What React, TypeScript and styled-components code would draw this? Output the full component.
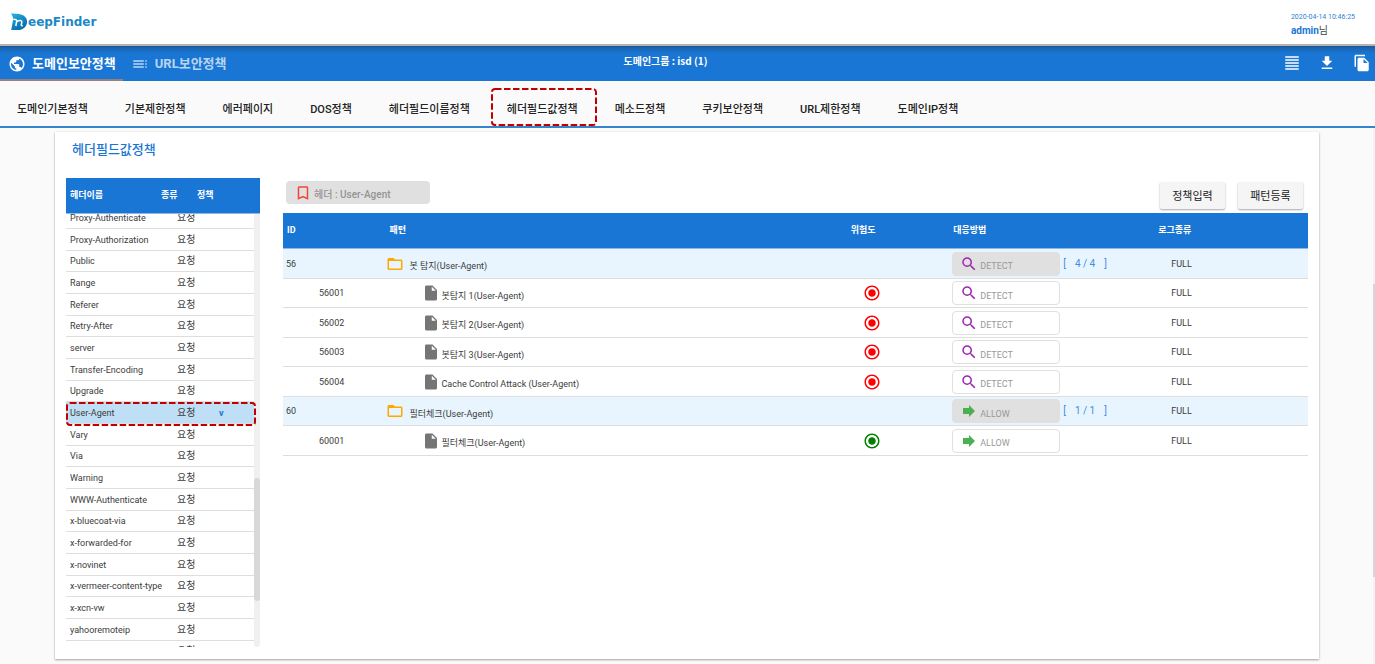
import React from 'react';
import styled, { createGlobalStyle } from 'styled-components';
import {
  MdBookmarkBorder,
  MdFileCopy,
  MdFileDownload,
  MdFolderOpen,
  MdFormatAlignJustify,
  MdForward,
  MdInsertDriveFile,
  MdPublic,
  MdRadioButtonChecked,
  MdSearch,
  MdToc,
} from 'react-icons/md';

const BLUE = '#1976d5';
const LINE = '#dedede';

const GlobalStyle = createGlobalStyle`
  *, *::before, *::after { box-sizing: border-box; }
  body {
    margin: 0;
    background: #fafafa;
    color: #3c3c3c;
    font-family: Roboto, "Noto Sans CJK KR", sans-serif;
    font-size: 9px;
    line-height: 12px;
  }
  button { font-family: inherit; cursor: pointer; }
  a { text-decoration: none; color: inherit; }
  svg { display: block; flex: none; }
`;

const Page = styled.div`
  display: flex;
  flex-direction: column;
  min-height: 100vh;
`;

/* ---------- top bar ---------- */

const TopBar = styled.header`
  display: flex;
  justify-content: space-between;
  height: 46px;
  padding: 0 20px 0 10px;
  background: #fff;
  border-bottom: 2px solid #b4b4b4;
`;

const Logo = styled.a`
  display: flex;
  align-items: center;
  color: #1b88c8;
  font: bold 12px/16px "DejaVu Sans", sans-serif;
`;

const Session = styled.div`
  padding-top: 12px;
  color: #2a7fd4;
  font-size: 7px;
  line-height: 10px;
`;

const UserName = styled.div`
  margin-top: 2px;
  color: #444;
  font-size: 10px;
  line-height: 14px;

  b { color: ${BLUE}; }
`;

/* ---------- main navigation ---------- */

const MainNav = styled.nav`
  display: grid;
  grid-template-columns: 1fr auto 1fr;
  height: 35px;
  padding-right: 4px;
  color: #fff;
  background: linear-gradient(#1b5896, #1b69b8 3px, ${BLUE} 8px);
`;

const NavGroup = styled.div`
  display: flex;
`;

const NavTab = styled.a<{ $active?: boolean }>`
  display: flex;
  align-items: center;
  gap: 6px;
  padding: 3px 7px 0 8px;
  border-bottom: 2px solid ${(p) => (p.$active ? '#98807f' : 'transparent')};
  color: ${(p) => (p.$active ? '#fff' : 'rgba(255, 255, 255, 0.7)')};
  font-size: 13px;
  font-weight: 700;
`;

const GroupName = styled.div`
  padding: 9px 40px 0 0;
  font: bold 10px/12px "Noto Sans CJK KR", sans-serif;
`;

const NavActions = styled.div`
  display: flex;
  align-items: center;
  justify-content: flex-end;
  gap: 17px;
  padding-bottom: 2px;
`;

const IconButton = styled.button`
  padding: 0;
  border: 0;
  background: none;
  color: #fff;
`;

/* ---------- policy tabs ---------- */

const PolicyTabs = styled.nav`
  display: flex;
  height: 47px;
  padding-top: 7px;
  border-bottom: 2px solid #3585cc;
`;

const PolicyTab = styled.a`
  position: relative;
  display: flex;
  align-items: center;
  justify-content: center;
  padding: 5px 20px 0 17px;
  color: #222;
  font-size: 11px;
  font-weight: 500;
`;

const Marker = styled.svg<{ $inset: string }>`
  position: absolute;
  inset: ${(p) => p.$inset};
  z-index: 2;
  overflow: visible;
  pointer-events: none;
`;

/* ---------- content ---------- */

const Content = styled.main`
  display: flex;
  flex: 1;
`;

const Scroller = styled.div`
  flex: 1;
  display: flex;
  padding: 4px 54px 5px 55px;
`;

const PageTrack = styled.div`
  width: 2px;
  padding-top: 156px;
  background: #f3f3f3;
`;

const PageThumb = styled.div`
  height: 293px;
  background: #d6d6d6;
`;

const Card = styled.section`
  flex: 1;
  padding: 10px 11px 12px;
  background: #fff;
  box-shadow: 0 1px 2px rgba(0, 0, 0, 0.35), 0 0 2px rgba(0, 0, 0, 0.06);
`;

const CardTitle = styled.h1`
  margin: 0 0 20px;
  padding-left: 6px;
  color: ${BLUE};
  font-size: 13px;
  line-height: 16px;
  font-weight: 500;
`;

const Columns = styled.div`
  display: flex;
  align-items: flex-start;
  gap: 23px;
`;

const Table = styled.table`
  width: 100%;
  table-layout: fixed;
  border-spacing: 0;

  th, td { padding: 0 0 0 4px; text-align: left; white-space: nowrap; }
  td { border-bottom: 1px solid ${LINE}; }
`;

const HeadRow = styled.tr`
  height: 36px;
  background: ${BLUE};
  color: #fff;
  font-size: 9px;
  font-weight: 700;

  th { padding-bottom: 2px; border-bottom: 1px solid #8ab9e8; }
`;

/* ---------- header list ---------- */

const HeaderPanel = styled.div`
  flex: 0 0 194px;
`;

const HeaderScroll = styled.div`
  display: flex;
  height: 433px;
  overflow: hidden;
`;

const HeaderRows = styled.div`
  flex: 1;
  margin-top: -7px;
`;

const HeaderRow = styled.tr<{ $selected?: boolean }>`
  position: relative;
  height: 22px;
  background: ${(p) => (p.$selected ? '#bfdff6' : '#fff')};

  &:nth-child(3n) { height: 21px; }
  td:nth-child(2) { font-size: 10px; }
  td:nth-child(3) { color: ${BLUE}; font-weight: 700; }
`;

const ListTrack = styled.div`
  width: 6px;
  padding-top: 264px;
  border-radius: 0 0 3px 3px;
  background: #f0f0f0;
`;

const ListThumb = styled.div`
  height: 123px;
  border-radius: 3px;
  background: #d8d8d8;
`;

/* ---------- pattern table ---------- */

const PatternPanel = styled.div`
  flex: 1;
  min-width: 0;
`;

const Toolbar = styled.div`
  display: flex;
  align-items: flex-start;
  height: 35px;
  padding: 3px 5px 0 3px;
`;

const CurrentHeader = styled.div`
  display: flex;
  align-items: center;
  gap: 2px;
  width: 144px;
  height: 23px;
  margin-right: auto;
  padding-left: 8px;
  border-radius: 4px;
  background: #e0e0e0;
  color: #949494;
  font-size: 10px;
  font-weight: 500;
`;

const Lowered = styled.span`
  padding-top: 5px;
`;

const RaisedButton = styled.button`
  width: 65px;
  height: 27px;
  margin: 1px 0 0 13px;
  padding: 0 0 2px;
  border: 0;
  border-radius: 2px;
  background: #f5f5f5;
  color: #222;
  font-size: 11px;
  box-shadow: 0 1px 2px rgba(0, 0, 0, 0.35);
`;

const PatternRow = styled.tr<{ $group?: boolean }>`
  height: 29px;
  background: ${(p) => (p.$group ? '#e8f5fe' : '#fff')};

  &:nth-child(odd) { height: 30px; }
  td:nth-child(1) { padding-left: ${(p) => (p.$group ? 3 : 36)}px; }
  td:nth-child(2) { padding-left: ${(p) => (p.$group ? 0 : 36)}px; }
  td:nth-child(3) { padding-left: 16px; }
  td:nth-child(4) { padding-left: 3px; }
  td:nth-child(5) { padding-left: 17px; }
`;

const PatternName = styled.div<{ $group?: boolean }>`
  display: flex;
  align-items: center;
  gap: ${(p) => (p.$group ? 6 : 2)}px;
`;

const Response = styled.div`
  display: flex;
  align-items: center;
`;

const ResponseButton = styled.button<{ $group?: boolean }>`
  display: flex;
  align-items: center;
  gap: 2px;
  width: 108px;
  height: 24px;
  padding: 0 0 0 7px;
  border: 1px solid #e0e0e0;
  border-radius: 4px;
  background: ${(p) => (p.$group ? '#e0e0e0' : '#fff')};
  color: #999;
  font-size: 9px;
  line-height: 12px;
`;

const Count = styled.span`
  display: flex;
  gap: 9px;
  padding-left: 3px;
  color: #3f8ede;
  font-size: 10px;
  white-space: nowrap;
`;

const policyTabs = [
  '도메인기본정책', '기본제한정책', '에러페이지', 'DOS정책', '헤더필드이름정책',
  '헤더필드값정책', '메소드정책', '쿠키보안정책', 'URL제한정책', '도메인IP정책',
];

const headerNames = [
  'Proxy-Authenticate', 'Proxy-Authorization', 'Public', 'Range', 'Referer', 'Retry-After',
  'server', 'Transfer-Encoding', 'Upgrade', 'User-Agent', 'Vary', 'Via', 'Warning',
  'WWW-Authenticate', 'x-bluecoat-via', 'x-forwarded-for', 'x-novinet',
  'x-vermeer-content-type', 'x-xcn-vw', 'yahooremoteip', 'yahooremotestate',
];

type Pattern = {
  id: string;
  name: string;
  action: 'DETECT' | 'ALLOW';
  count?: string;
  risk?: 'red' | 'green';
};

const patterns: Pattern[] = [
  { id: '56', name: '봇 탐지(User-Agent)', action: 'DETECT', count: '4 / 4' },
  { id: '56001', name: '봇탐지 1(User-Agent)', action: 'DETECT', risk: 'red' },
  { id: '56002', name: '봇탐지 2(User-Agent)', action: 'DETECT', risk: 'red' },
  { id: '56003', name: '봇탐지 3(User-Agent)', action: 'DETECT', risk: 'red' },
  { id: '56004', name: 'Cache Control Attack (User-Agent)', action: 'DETECT', risk: 'red' },
  { id: '60', name: '필터체크(User-Agent)', action: 'ALLOW', count: '1 / 1' },
  { id: '60001', name: '필터체크(User-Agent)', action: 'ALLOW', risk: 'green' },
];

function DashedMarker({ inset, width, height }: { inset: string; width: number; height: number }) {
  return (
    <Marker $inset={inset} width={width} height={height} aria-hidden="true">
      <rect x="1" y="1" width={width - 2} height={height - 2} rx="3" fill="none"
        stroke="#c00000" strokeWidth="2" strokeDasharray="6.5 2.5" />
    </Marker>
  );
}

function LogoMark() {
  return (
    <svg width="18" height="18" viewBox="0 0 18 18" aria-hidden="true">
      <defs>
        <linearGradient id="mark" x1="0" y1="0" x2="0.6" y2="1">
          <stop offset="0" stopColor="#27b4e4" />
          <stop offset="1" stopColor="#0668ae" />
        </linearGradient>
      </defs>
      <path fill="url(#mark)" d="M1 .5C7 .6 13.500 .8 16.200 5.200c2.600 5.300-.9 11.500-7.200 11.800H1.200L3 7.200C3.200 4.800 2.600 2.600 1 .5z" />
      <path fill="none" stroke="#fff" strokeWidth="1.500" d="M3.200 6.200c2.600 0 3.700.6 3.500 2L5.800 13M7 8.800c1.900-1.900 5.200-1.700 4.800.5l-.5 2.500c-.1.900.5 1.200 1.500.8" />
    </svg>
  );
}

export default function App() {
  return (
    <Page>
      <GlobalStyle />
      <TopBar>
        <Logo href="#"><LogoMark />eepFinder</Logo>
        <Session>
          2020-04-14 10:46:25
          <UserName><b>admin</b>님</UserName>
        </Session>
      </TopBar>

      <MainNav>
        <NavGroup>
          <NavTab href="#" $active><MdPublic size={18} />도메인보안정책</NavTab>
          <NavTab href="#"><MdToc size={18} />URL보안정책</NavTab>
        </NavGroup>
        <GroupName>도메인그룹 : isd (1)</GroupName>
        <NavActions>
          <IconButton aria-label="목록"><MdFormatAlignJustify size={18} /></IconButton>
          <IconButton aria-label="다운로드"><MdFileDownload size={18} /></IconButton>
          <IconButton aria-label="복사"><MdFileCopy size={18} /></IconButton>
        </NavActions>
      </MainNav>

      <PolicyTabs>
        {policyTabs.map((tab) => (
          <PolicyTab href="#" key={tab}>
            {tab}
            {tab === '헤더필드값정책' && <DashedMarker inset="0 auto auto 1px" width={106} height={38} />}
          </PolicyTab>
        ))}
      </PolicyTabs>

      <Content>
        <Scroller>
          <Card>
            <CardTitle>헤더필드값정책</CardTitle>
            <Columns>
              <HeaderPanel>
                <Table>
                  <colgroup><col width="91" /><col width="36" /><col /></colgroup>
                  <thead>
                    <HeadRow><th>헤더이름</th><th>종류</th><th>정책</th></HeadRow>
                  </thead>
                </Table>
                <HeaderScroll>
                  <HeaderRows>
                    <Table aria-label="헤더 목록">
                      <colgroup><col width="107" /><col width="42" /><col /></colgroup>
                      <tbody>
                        {headerNames.map((name) => {
                          const selected = name === 'User-Agent';
                          return (
                            <HeaderRow key={name} $selected={selected}>
                              <td>{name}</td>
                              <td>요청</td>
                              <td>
                                {selected && 'v'}
                                {selected && <DashedMarker inset="0 auto auto 0" width={190} height={24} />}
                              </td>
                            </HeaderRow>
                          );
                        })}
                      </tbody>
                    </Table>
                  </HeaderRows>
                  <ListTrack><ListThumb /></ListTrack>
                </HeaderScroll>
              </HeaderPanel>

              <PatternPanel>
                <Toolbar>
                  <CurrentHeader>
                    <MdBookmarkBorder size={18} color="#f44336" />
                    <Lowered>헤더 : User-Agent</Lowered>
                  </CurrentHeader>
                  <RaisedButton>정책입력</RaisedButton>
                  <RaisedButton>패턴등록</RaisedButton>
                </Toolbar>
                <Table>
                  <colgroup>
                    <col width="10%" /><col width="45%" /><col width="10%" /><col width="20%" /><col width="15%" />
                  </colgroup>
                  <thead>
                    <HeadRow>
                      <th>ID</th><th>패턴</th><th>위험도</th><th>대응방법</th><th>로그종류</th>
                    </HeadRow>
                  </thead>
                  <tbody>
                    {patterns.map((p) => {
                      const group = Boolean(p.count);
                      return (
                        <PatternRow key={p.id} $group={group}>
                          <td>{p.id}</td>
                          <td>
                            <PatternName $group={group}>
                              {group
                                ? <MdFolderOpen size={18} color="#ffa800" />
                                : <MdInsertDriveFile size={18} color="#757575" />}
                              <Lowered>{p.name}</Lowered>
                            </PatternName>
                          </td>
                          <td>{p.risk && <MdRadioButtonChecked size={18} color={p.risk} />}</td>
                          <td>
                            <Response>
                              <ResponseButton $group={group}>
                                {p.action === 'DETECT'
                                  ? <MdSearch size={18} color="#9c27b0" />
                                  : <MdForward size={18} color="#4caf50" />}
                                <Lowered>{p.action}</Lowered>
                              </ResponseButton>
                              {group && <Count><span>[</span><span>{p.count}</span><span>]</span></Count>}
                            </Response>
                          </td>
                          <td>FULL</td>
                        </PatternRow>
                      );
                    })}
                  </tbody>
                </Table>
              </PatternPanel>
            </Columns>
          </Card>
        </Scroller>
        <PageTrack><PageThumb /></PageTrack>
      </Content>
    </Page>
  );
}
